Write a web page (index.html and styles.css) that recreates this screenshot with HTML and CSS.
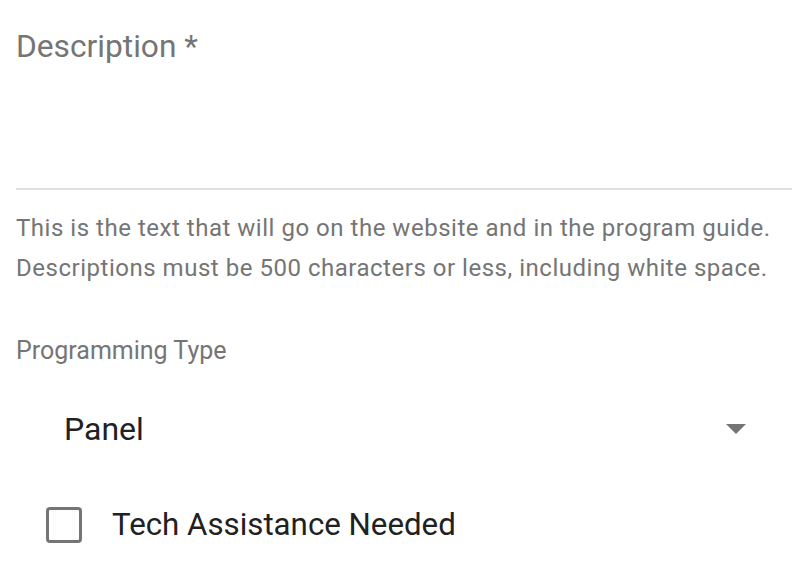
FILE: index.html
```html
<!DOCTYPE html>
<html lang="en">
<head>
    <meta charset="UTF-8">
    <meta name="viewport" content="width=device-width, initial-scale=1.0">
    <title>Program Form</title>
    <link rel="stylesheet" href="styles.css">
</head>
<body>
    <div class="form">
        <div class="field">
            <label class="field-label">Description *</label>
            <div class="field-input"></div>
        </div>
        <p class="helper">This is the text that will go on the website and in the program guide.<br>Descriptions must be 500 characters or less, including white space.</p>

        <div class="select-group">
            <span class="small-label">Programming Type</span>
            <div class="select">
                <span class="select-value">Panel</span>
                <span class="select-arrow"></span>
            </div>
        </div>

        <label class="check">
            <span class="check-box"></span>
            <span class="check-text">Tech Assistance Needed</span>
        </label>
    </div>
</body>
</html>
```

FILE: styles.css
```css
body {
    margin: 0;
    font-family: Roboto, "Liberation Sans", sans-serif;
    background-color: #fff;
}
.form {
    padding: 0 16px;
}
.field {
    padding-top: 27px;
}
.field-label {
    display: block;
    font-size: 31.7px;
    line-height: 40px;
    color: #757575;
}
.field-input {
    height: 121px;
    border-bottom: 2px solid #e0e0e0;
}
.helper {
    margin: 18px 0 0;
    font-size: 24px;
    line-height: 40px;
    letter-spacing: 0.52px;
    color: #757575;
}
.select-group {
    margin-top: 47px;
}
.small-label {
    display: block;
    font-size: 25px;
    line-height: 32px;
    color: #757575;
}
.select {
    display: flex;
    align-items: center;
    justify-content: space-between;
    margin-top: 42px;
    padding: 0 46px 0 48px;
}
.select-value {
    font-size: 32px;
    line-height: 40px;
    color: #212121;
}
.select-arrow {
    width: 0;
    height: 0;
    border-left: 10px solid transparent;
    border-right: 10px solid transparent;
    border-top: 10px solid #757575;
}
.check {
    display: flex;
    align-items: center;
    margin-top: 56px;
    padding-left: 30px;
}
.check-box {
    width: 30px;
    height: 30px;
    border: 3px solid #757575;
    border-radius: 4px;
}
.check-text {
    margin-left: 30px;
    font-size: 31.25px;
    line-height: 40px;
    color: #212121;
}
```
